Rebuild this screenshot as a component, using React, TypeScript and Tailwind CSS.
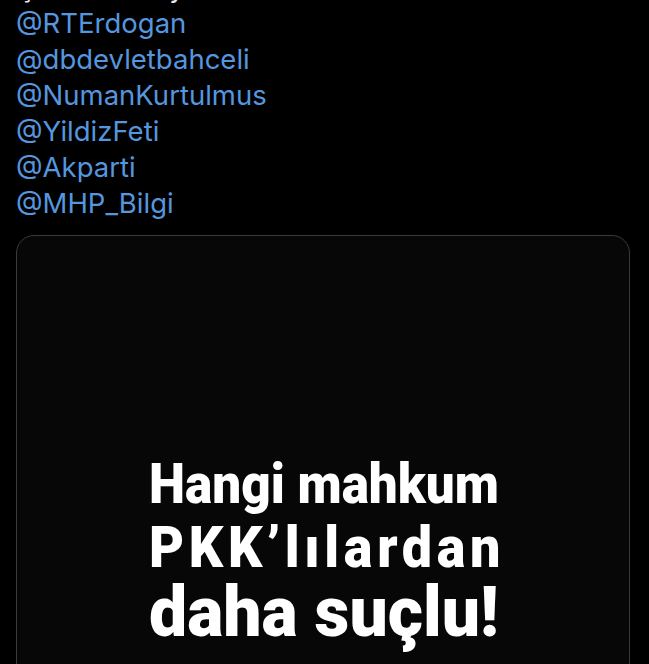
import { FC } from "react";

const mentions = [
  "@RTErdogan",
  "@dbdevletbahceli",
  "@NumanKurtulmus",
  "@YildizFeti",
  "@Akparti",
  "@MHP_Bilgi",
];

const App: FC = () => {
  return (
    <div className="w-[649px] h-[664px] overflow-hidden bg-black">
      <div className="px-4 pt-[3px] font-['Inter',sans-serif] text-[27.5px] leading-[36px]">
        <div className="-mt-[34px] text-[#e7e9ea]">Çok önemli yetkililere</div>
        {mentions.map((m) => (
          <div key={m} className="text-[#5596df]">
            {m}
          </div>
        ))}
      </div>

      <div className="ml-4 mt-[14px] w-[614px] h-[600px] rounded-[18px] border border-[#3a3a3a] bg-[#070707] pt-[220px]">
        <div className="mx-auto w-[348px] font-['Roboto',sans-serif] font-black text-white whitespace-nowrap">
          <div className="origin-left scale-x-[0.915] text-[56px] leading-none">Hangi mahkum</div>
          <div className="mt-[6px] origin-left scale-x-[0.93] text-[58px] leading-none tracking-[5px]">PKK’lılardan</div>
          <div className="mt-[1px] origin-left scale-x-[0.97] text-[70px] leading-none">daha suçlu!</div>
        </div>
      </div>
    </div>
  );
};

export default App;
